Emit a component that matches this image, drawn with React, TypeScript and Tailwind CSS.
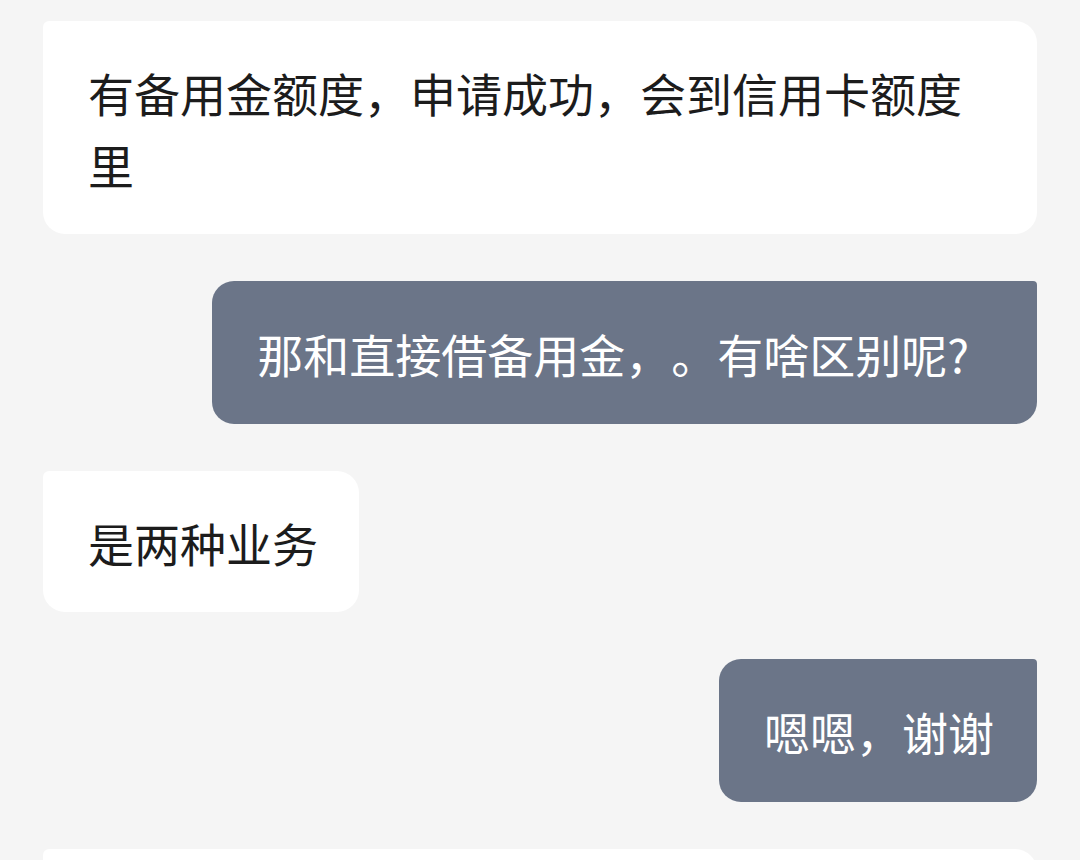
const font = { fontFamily: '"Noto Sans CJK SC", "Noto Sans", sans-serif' };

const messages = [
  { from: 'them', text: '有备用金额度，申请成功，会到信用卡额度里' },
  { from: 'me', text: '那和直接借备用金，。有啥区别呢?', wide: true },
  { from: 'them', text: '是两种业务' },
  { from: 'me', text: '嗯嗯，谢谢' },
];

export default function App() {
  return (
    <div
      className="w-[1080px] h-[860px] overflow-hidden bg-[#f5f5f5] px-[43px] pt-[21px] flex flex-col gap-[47px] [text-spacing-trim:space-all]"
      style={font}
    >
      {messages.map((m, i) =>
        m.from === 'them' ? (
          <div key={i} className="flex justify-start">
            <div className="max-w-[994px] bg-white rounded-[22px] rounded-tl-[6px] pl-[45px] pr-[41px] pt-[35px] pb-[34px] text-[46px] leading-[72px] text-[#1c1c1c]">
              {m.text}
            </div>
          </div>
        ) : (
          <div key={i} className="flex justify-end">
            <div
              className={`bg-[#6b7588] rounded-[22px] rounded-tr-[4px] pl-[45px] pt-[36px] pb-[35px] text-[46px] leading-[72px] text-white ${
                m.wide ? 'pr-[68px]' : 'pr-[43px]'
              }`}
            >
              {m.text}
            </div>
          </div>
        )
      )}
      {/* next incoming bubble, cut off by the screen edge */}
      <div className="h-[120px] shrink-0 bg-white rounded-[22px] rounded-tl-[6px]" />
    </div>
  );
}
